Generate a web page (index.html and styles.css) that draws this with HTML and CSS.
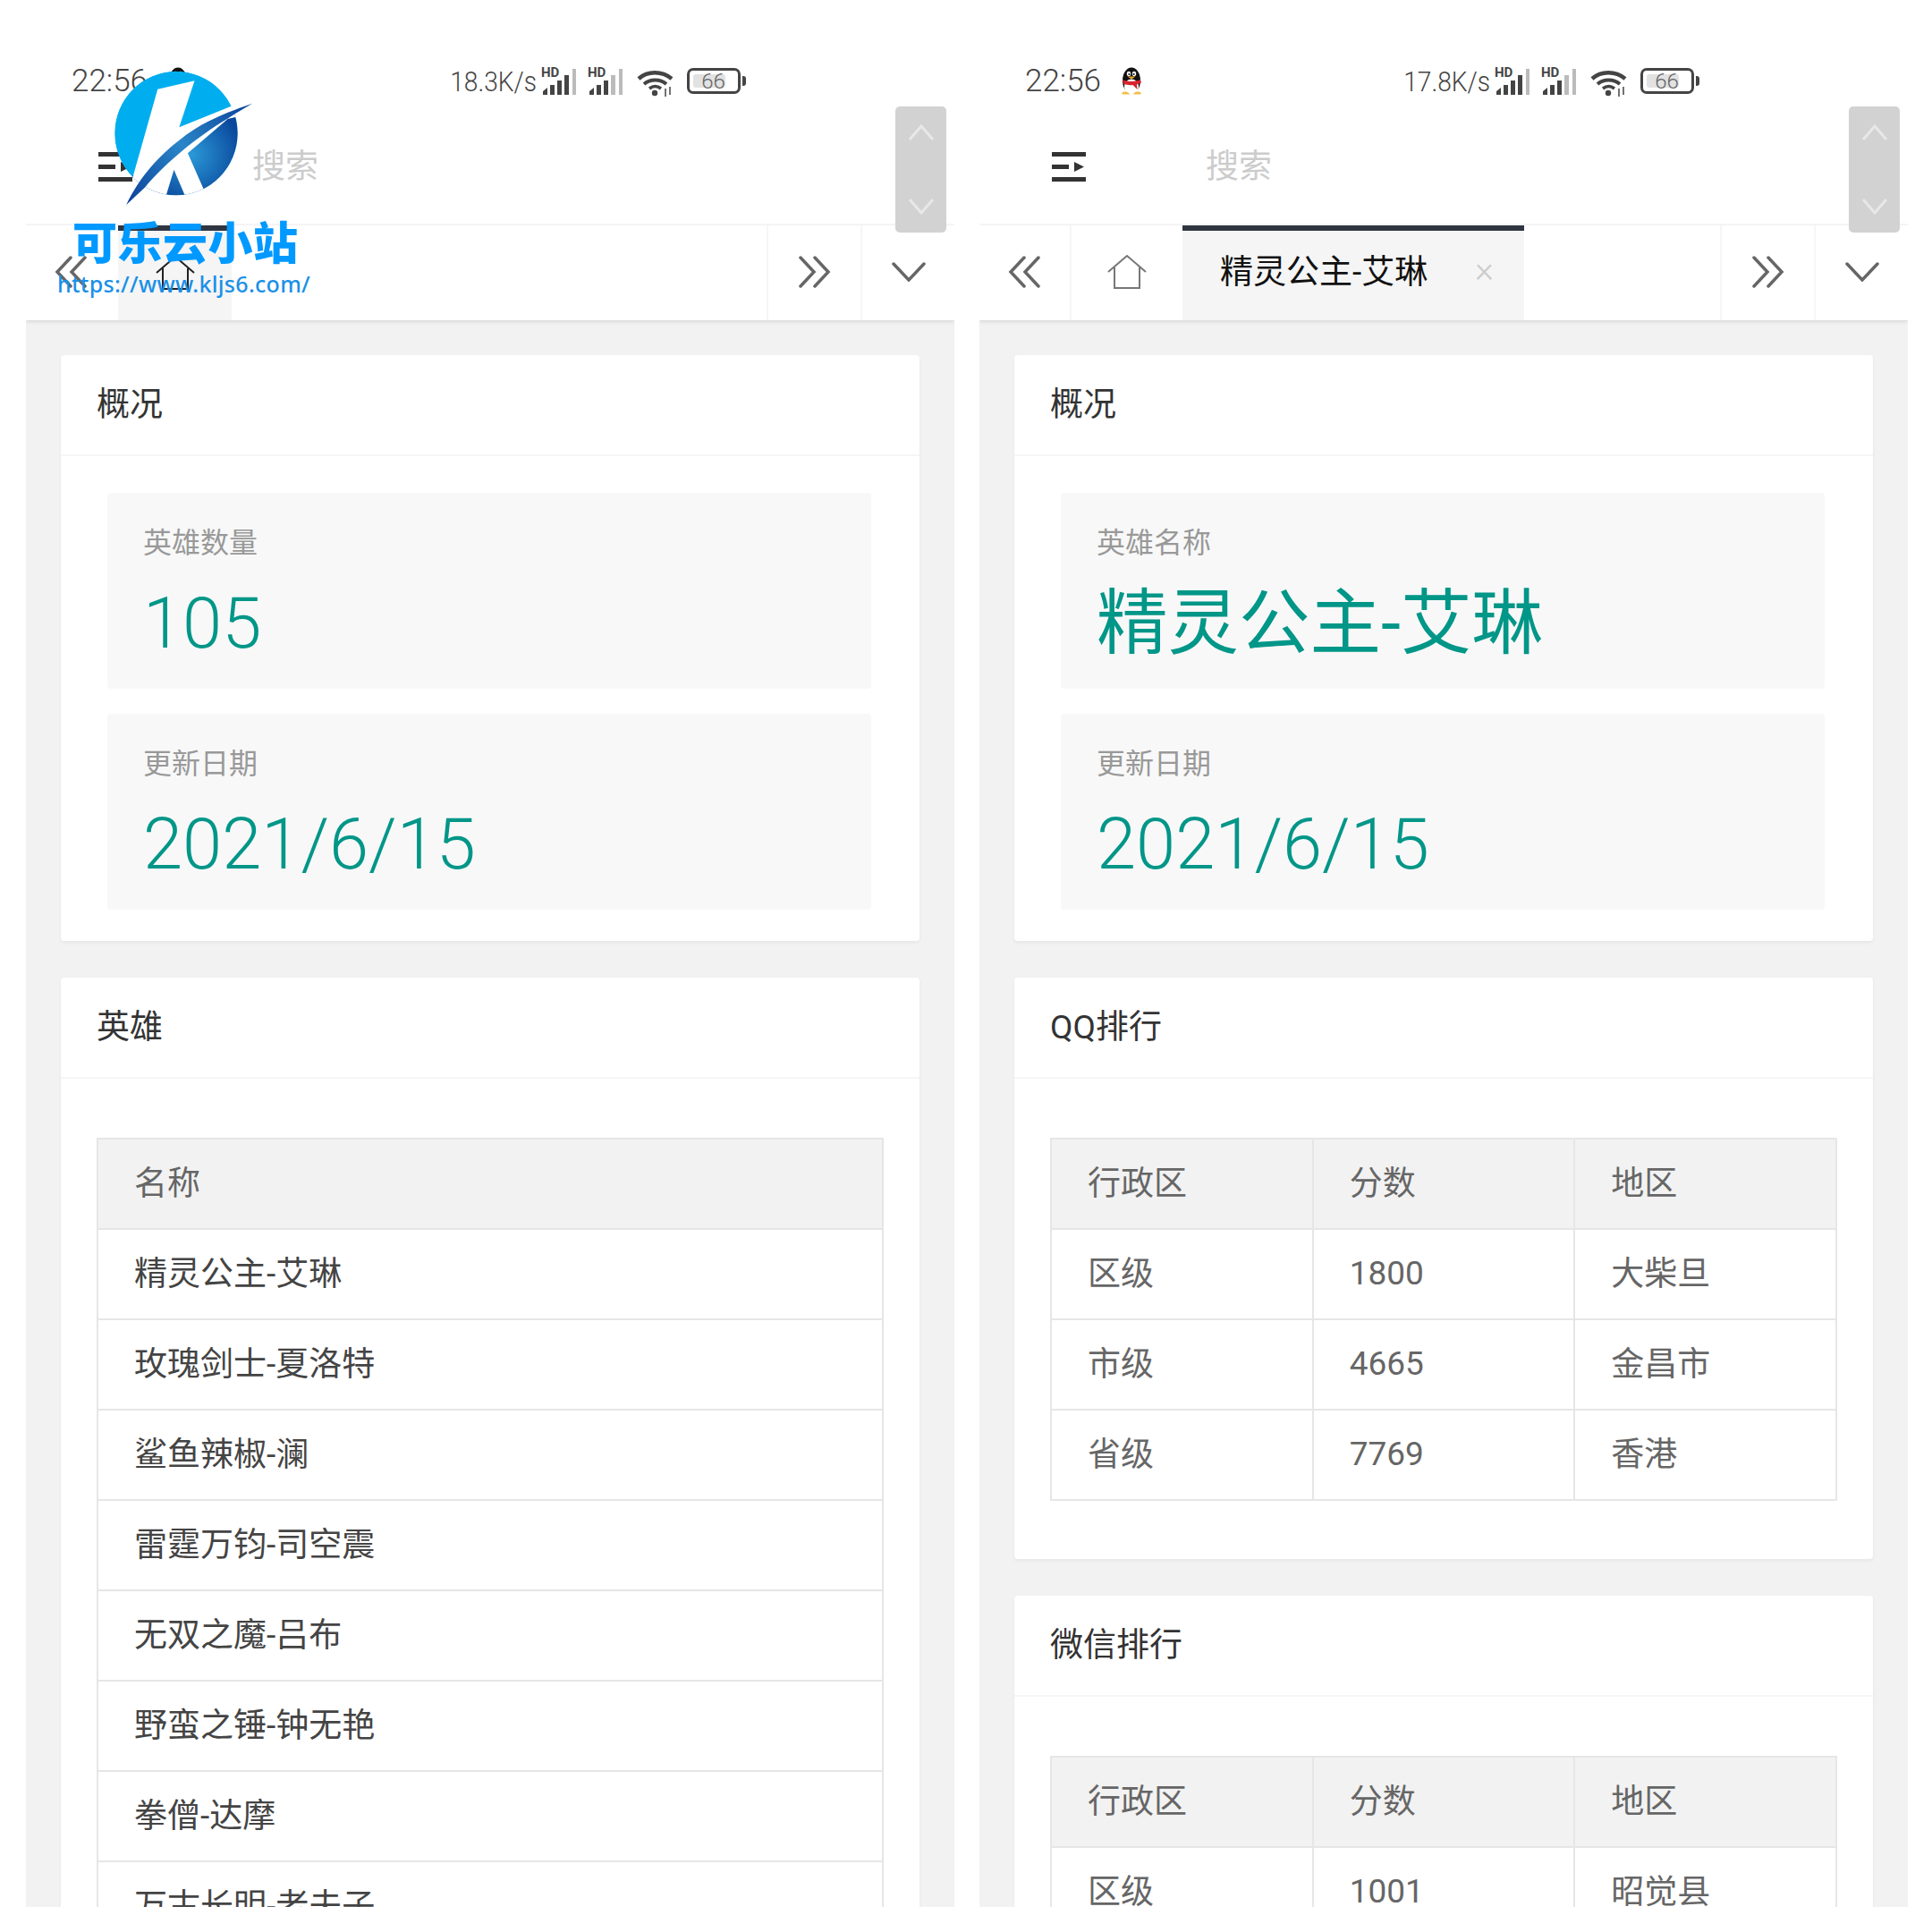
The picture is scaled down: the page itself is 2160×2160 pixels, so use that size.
FILE: index.html
```html
<!DOCTYPE html>
<html lang="zh-CN">
<head>
    <meta charset="UTF-8">
    <title>英雄排行</title>
    <link rel="stylesheet" href="styles.css">
</head>
<body>
    <svg class="defs" width="0" height="0">
        <defs>
            <symbol id="penguin" viewBox="0 0 26 32">
                <ellipse cx="13" cy="15" rx="10" ry="14.500" fill="#111"/>
                <ellipse cx="13" cy="22" rx="8" ry="8.500" fill="#fff"/>
                <ellipse cx="10" cy="7.500" rx="2.200" ry="2.800" fill="#fff"/>
                <ellipse cx="16" cy="7.500" rx="2.200" ry="2.800" fill="#fff"/>
                <circle cx="10.400" cy="8" r="1.100" fill="#111"/>
                <circle cx="15.600" cy="8" r="1.100" fill="#111"/>
                <path d="M8.500 10.500h9l-4.500 3z" fill="#f2a81d"/>
                <path d="M3 14c6 2.800 14 2.800 20 0l1 3.500-5 2 .5 5.500-5-5c-3.500.5-7 0-10.500-1.500z" fill="#d9232e"/>
                <path d="M2 29c3-2.500 8-1.500 9 1.500H3zM24 29c-3-2.500-8-1.500-9 1.500h8z" fill="#f2c04a"/>
            </symbol>
            <symbol id="wifi" viewBox="0 0 42 32">
                <path d="M2 11C12 2 28 2 39 11" fill="none" stroke="#444" stroke-width="4.500"/>
                <path d="M8 17c7-6 18-6 25 0" fill="none" stroke="#444" stroke-width="4"/>
                <path d="M14 22c4-3 9-3 13 0" fill="none" stroke="#444" stroke-width="3.500"/>
                <circle cx="20" cy="27" r="3.200" fill="#444"/>
                <path d="M32 22v9M37 20v9" stroke="#444" stroke-width="1.500"/>
            </symbol>
            <symbol id="chev-left" viewBox="0 0 37 36">
                <path d="M18 2L3 18l15 16M34 2L19 18l15 16" fill="none" stroke="#666" stroke-width="3.500" stroke-linecap="round"/>
            </symbol>
            <symbol id="chev-right" viewBox="0 0 37 36">
                <path d="M3 2l15 16L3 34M19 2l15 16-15 16" fill="none" stroke="#666" stroke-width="3.500" stroke-linecap="round"/>
            </symbol>
            <symbol id="chev-down" viewBox="0 0 38 22">
                <path d="M2 2l17 18L36 2" fill="none" stroke="#666" stroke-width="3.500" stroke-linecap="round"/>
            </symbol>
            <symbol id="home" viewBox="0 0 44 38">
                <path d="M1 19L22 1l21 18M8 14v23h28V14" fill="none" stroke="currentColor" stroke-width="2"/>
            </symbol>
            <symbol id="menu" viewBox="0 0 38 33">
                <path d="M0 0h38v5H0zM0 28h38v5H0zM0 14h19v5H0zM25 11l11 5.500-11 5.500z" fill="#333"/>
            </symbol>
        </defs>
    </svg>

    <div class="screen">
        <!-- left phone: hero list -->
        <div class="phone">
            <div class="status-bar">
                <span class="time">22:56</span>
                <svg class="qq-icon"><use href="#penguin"/></svg>
                <div class="status-right">
                    <span class="speed">18.3K/s</span>
                    <svg class="signal" viewBox="0 -6 40 36">
                        <text x="0" y="10" class="hd">HD</text>
                        <path d="M2 30v-4l5-4v8zM10 30V19h5v11zM18 30V14h5v16zM26 30V8h5v22z" fill="#444"/>
                        <path d="M35 30V1h4v29z" fill="#bbb"/>
                    </svg>
                    <svg class="signal signal-second" viewBox="0 -6 40 36">
                        <text x="0" y="10" class="hd">HD</text>
                        <path d="M2 30v-4l5-4v8zM10 30V19h5v11zM18 30V14h5v16z" fill="#444"/>
                        <path d="M26 30V8h5v22zM35 30V1h4v29z" fill="#bbb"/>
                    </svg>
                    <svg class="wifi"><use href="#wifi"/></svg>
                    <div class="battery"><span class="battery-level">66</span></div>
                    <div class="battery-nub"></div>
                </div>
            </div>
            <div class="header">
                <svg class="menu-icon"><use href="#menu"/></svg>
                <span class="search">搜索</span>
            </div>
            <div class="tabs">
                <div class="tab-arrow"><svg class="icon-double"><use href="#chev-left"/></svg></div>
                <div class="tab-home tab-active"><svg class="icon-home"><use href="#home"/></svg></div>
                <div class="tab-spacer"></div>
                <div class="tab-end"><svg class="icon-double"><use href="#chev-right"/></svg></div>
                <div class="tab-end"><svg class="icon-down"><use href="#chev-down"/></svg></div>
            </div>
            <div class="content">
                <div class="card">
                    <div class="card-title">概况</div>
                    <div class="card-body stats">
                        <div class="stat">
                            <div class="stat-label">英雄数量</div>
                            <div class="stat-value">105</div>
                        </div>
                        <div class="stat">
                            <div class="stat-label">更新日期</div>
                            <div class="stat-value">2021/6/15</div>
                        </div>
                    </div>
                </div>
                <div class="card">
                    <div class="card-title">英雄</div>
                    <div class="card-body">
                        <table class="data-table hero-table">
                            <thead><tr><th>名称</th></tr></thead>
                            <tbody>
                                <tr><td>精灵公主-艾琳</td></tr>
                                <tr><td>玫瑰剑士-夏洛特</td></tr>
                                <tr><td>鲨鱼辣椒-澜</td></tr>
                                <tr><td>雷霆万钧-司空震</td></tr>
                                <tr><td>无双之魔-吕布</td></tr>
                                <tr><td>野蛮之锤-钟无艳</td></tr>
                                <tr><td>拳僧-达摩</td></tr>
                                <tr><td>万古长明-老夫子</td></tr>
                            </tbody>
                        </table>
                    </div>
                </div>
            </div>
            <div class="scroll-thumb">
                <svg class="thumb-chev" viewBox="0 0 30 20"><path d="M2 18L15 3l13 15" fill="none" stroke="#e8e8e8" stroke-width="3"/></svg>
                <svg class="thumb-chev" viewBox="0 0 30 20"><path d="M2 2l13 15L28 2" fill="none" stroke="#e8e8e8" stroke-width="3"/></svg>
            </div>

            <!-- site watermark over the left phone -->
            <div class="watermark">
                <svg class="wm-logo" viewBox="360 100 480 480" preserveAspectRatio="none">
                    <defs>
                        <clipPath id="wm-disc"><ellipse cx="572" cy="328" rx="200" ry="208"/></clipPath>
                        <radialGradient id="wm-blue" gradientUnits="userSpaceOnUse" cx="620" cy="400" r="170">
                            <stop offset="0" stop-color="#2b9ad8"/>
                            <stop offset="1" stop-color="#0a479c"/>
                        </radialGradient>
                        <linearGradient id="wm-swoosh" gradientUnits="userSpaceOnUse" x1="410" y1="568" x2="820" y2="228">
                            <stop offset="0" stop-color="#0a3f9a"/>
                            <stop offset=".5" stop-color="#2a86c8"/>
                            <stop offset="1" stop-color="#0a3f9a"/>
                        </linearGradient>
                    </defs>
                    <g clip-path="url(#wm-disc)">
                        <ellipse cx="572" cy="328" rx="200" ry="208" fill="#00aeef"/>
                        <path d="M780 240V540H500L420 480L600 320z" fill="url(#wm-blue)"/>
                        <path d="M512 180L632 152L582 308L780 225V270L740 280L610 395L660 512L680 560H620L600 535L565 450L540 535L520 570H400L432 472z" fill="#fff"/>
                    </g>
                    <path d="M820 228C700 270 640 305 590 345C520 400 455 470 410 568L470 510C540 425 640 340 738 280C760 265 790 245 820 228z" fill="url(#wm-swoosh)"/>
                </svg>
                <div class="wm-name">可乐云小站</div>
                <div class="wm-url">https://www.kljs6.com/</div>
            </div>
        </div>

        <!-- right phone: hero detail -->
        <div class="phone">
            <div class="status-bar">
                <span class="time">22:56</span>
                <svg class="qq-icon"><use href="#penguin"/></svg>
                <div class="status-right">
                    <span class="speed">17.8K/s</span>
                    <svg class="signal" viewBox="0 -6 40 36">
                        <text x="0" y="10" class="hd">HD</text>
                        <path d="M2 30v-4l5-4v8zM10 30V19h5v11zM18 30V14h5v16zM26 30V8h5v22z" fill="#444"/>
                        <path d="M35 30V1h4v29z" fill="#bbb"/>
                    </svg>
                    <svg class="signal signal-second" viewBox="0 -6 40 36">
                        <text x="0" y="10" class="hd">HD</text>
                        <path d="M2 30v-4l5-4v8zM10 30V19h5v11zM18 30V14h5v16z" fill="#444"/>
                        <path d="M26 30V8h5v22zM35 30V1h4v29z" fill="#bbb"/>
                    </svg>
                    <svg class="wifi"><use href="#wifi"/></svg>
                    <div class="battery"><span class="battery-level">66</span></div>
                    <div class="battery-nub"></div>
                </div>
            </div>
            <div class="header">
                <svg class="menu-icon"><use href="#menu"/></svg>
                <span class="search">搜索</span>
            </div>
            <div class="tabs">
                <div class="tab-arrow tab-arrow-line"><svg class="icon-double"><use href="#chev-left"/></svg></div>
                <div class="tab-home tab-home-muted"><svg class="icon-home"><use href="#home"/></svg></div>
                <div class="tab-open tab-active">
                    <span class="tab-name">精灵公主-艾琳</span>
                    <span class="tab-close">×</span>
                </div>
                <div class="tab-spacer"></div>
                <div class="tab-end"><svg class="icon-double"><use href="#chev-right"/></svg></div>
                <div class="tab-end"><svg class="icon-down"><use href="#chev-down"/></svg></div>
            </div>
            <div class="content">
                <div class="card">
                    <div class="card-title">概况</div>
                    <div class="card-body stats">
                        <div class="stat">
                            <div class="stat-label">英雄名称</div>
                            <div class="stat-value stat-value-name">精灵公主-艾琳</div>
                        </div>
                        <div class="stat">
                            <div class="stat-label">更新日期</div>
                            <div class="stat-value">2021/6/15</div>
                        </div>
                    </div>
                </div>
                <div class="card">
                    <div class="card-title">QQ排行</div>
                    <div class="card-body">
                        <table class="data-table">
                            <thead><tr><th>行政区</th><th>分数</th><th>地区</th></tr></thead>
                            <tbody>
                                <tr><td>区级</td><td class="score">1800</td><td>大柴旦</td></tr>
                                <tr><td>市级</td><td class="score">4665</td><td>金昌市</td></tr>
                                <tr><td>省级</td><td class="score">7769</td><td>香港</td></tr>
                            </tbody>
                        </table>
                    </div>
                </div>
                <div class="card">
                    <div class="card-title">微信排行</div>
                    <div class="card-body">
                        <table class="data-table">
                            <thead><tr><th>行政区</th><th>分数</th><th>地区</th></tr></thead>
                            <tbody>
                                <tr><td>区级</td><td class="score">1001</td><td>昭觉县</td></tr>
                            </tbody>
                        </table>
                    </div>
                </div>
            </div>
            <div class="scroll-thumb">
                <svg class="thumb-chev" viewBox="0 0 30 20"><path d="M2 18L15 3l13 15" fill="none" stroke="#e8e8e8" stroke-width="3"/></svg>
                <svg class="thumb-chev" viewBox="0 0 30 20"><path d="M2 2l13 15L28 2" fill="none" stroke="#e8e8e8" stroke-width="3"/></svg>
            </div>
        </div>
    </div>
</body>
</html>
```

FILE: styles.css
```css
/* Two phone screenshots side by side */
body {
    margin: 0;
    padding: 0;
    background-color: #ffffff;
    font-family: Roboto, "Noto Sans CJK SC", sans-serif;
    color: #333;
}

.defs {
    display: block;
    height: 0;
}

.screen {
    display: flex;
    gap: 28px;
    padding-left: 29px;
    height: 2132px;
    overflow: hidden;
}

.phone {
    position: relative;
    width: 1038px;
    height: 2132px;
    overflow: hidden;
    background-color: #f2f2f2;
    flex: none;
}

/* Status bar */
.status-bar {
    display: flex;
    align-items: center;
    height: 117px;
    padding: 64px 233px 0 51px;
    box-sizing: border-box;
    background-color: #ffffff;
    color: #444;
}

.time {
    font-size: 35px;
    font-weight: 300;
}

.qq-icon {
    width: 26px;
    height: 32px;
    margin-left: 21px;
}

.status-right {
    display: flex;
    align-items: center;
    margin-left: auto;
}

.speed {
    display: inline-block;
    font-size: 32px;
    font-weight: 300;
    margin-right: 5px;
    white-space: nowrap;
    transform: scaleX(0.88);
    transform-origin: right center;
}

.signal {
    width: 40px;
    height: 36px;
    margin-top: -6px;
}

.signal-second {
    margin-left: 12px;
}

.hd {
    font-family: Roboto, sans-serif;
    font-size: 15px;
    font-weight: 700;
    fill: #444;
}

.wifi {
    width: 42px;
    height: 32px;
    margin-left: 15px;
    margin-top: 4px;
}

.battery {
    width: 60px;
    height: 29px;
    margin-left: 14px;
    padding: 4px;
    box-sizing: border-box;
    border: 3px solid #444;
    border-radius: 7px;
}

.battery-level {
    display: block;
    width: 36px;
    height: 100%;
    border-radius: 3px;
    background-color: #e2e2e2;
    color: #666;
    font-size: 24px;
    font-weight: 300;
    line-height: 16px;
    text-align: center;
    text-indent: 9px;
    white-space: nowrap;
}

.battery-nub {
    width: 4px;
    height: 11px;
    margin-left: 2px;
    border-radius: 0 3px 3px 0;
    background-color: #444;
}

/* Search header */
.header {
    display: flex;
    align-items: center;
    height: 135px;
    box-sizing: border-box;
    padding-left: 81px;
    background-color: #ffffff;
    border-bottom: 2px solid #f6f6f6;
}

.menu-icon {
    width: 38px;
    height: 33px;
    margin-top: 5px;
}

.search {
    margin-left: 134px;
    margin-bottom: 2px;
    font-size: 37px;
    color: #ccc;
}

/* Tab strip */
.tabs {
    position: relative;
    display: flex;
    align-items: stretch;
    height: 106px;
    background-color: #ffffff;
    box-shadow: 0 2px 4px rgba(0, 0, 0, 0.1);
}

.tab-arrow {
    display: flex;
    align-items: center;
    width: 103px;
    padding: 0 0 2px 32px;
    box-sizing: border-box;
    flex: none;
}

.tab-arrow-line {
    border-right: 2px solid #f6f6f6;
}

.tab-home {
    display: flex;
    align-items: center;
    justify-content: center;
    width: 124px;
    box-sizing: border-box;
    color: #222;
    flex: none;
}

.tab-home-muted {
    padding-bottom: 2px;
    color: #777;
}

.tab-active {
    background-color: #f5f5f5;
    border-top: 6px solid #2f3541;
    padding-bottom: 6px;
}

.tab-home.tab-active {
    width: 127px;
}

.tab-open {
    display: flex;
    align-items: center;
    justify-content: space-between;
    width: 382px;
    padding: 0 34px 14px 42px;
    box-sizing: border-box;
    flex: none;
}

.tab-name {
    font-size: 37px;
    color: #111;
}

.tab-close {
    font-size: 40px;
    font-weight: 300;
    color: #ccc;
}

.tab-spacer {
    flex: 1;
}

.tab-end {
    display: flex;
    align-items: center;
    justify-content: center;
    width: 105px;
    padding-bottom: 2px;
    box-sizing: border-box;
    border-left: 2px solid #f6f6f6;
    flex: none;
}

.icon-double {
    width: 37px;
    height: 36px;
}

.icon-home {
    width: 44px;
    height: 38px;
}

.icon-down {
    width: 38px;
    height: 22px;
}

/* Cards */
.content {
    padding: 39px 39px 0;
}

.card {
    margin-bottom: 41px;
    background-color: #ffffff;
    border-radius: 4px;
    box-shadow: 0 2px 4px rgba(0, 0, 0, 0.05);
}

.card-title {
    height: 113px;
    box-sizing: border-box;
    padding-left: 40px;
    border-bottom: 2px solid #f6f6f6;
    font-size: 37px;
    line-height: 111px;
    color: #333;
}

.card-body {
    padding: 66px 40px 65px;
}

.stats {
    display: flex;
    flex-direction: column;
    gap: 28px;
    padding: 41px 54px 35px 52px;
}

.stat {
    height: 219px;
    box-sizing: border-box;
    padding: 31px 40px 0;
    border-radius: 4px;
    background-color: #f8f8f8;
}

.stat-label {
    font-size: 32px;
    line-height: 50px;
    color: #999;
}

.stat-value {
    margin-top: 15px;
    font-size: 79.5px;
    font-weight: 300;
    line-height: 100px;
    color: #009688;
    white-space: nowrap;
}

.stat-value-name {
    font-weight: 400;
}

/* Tables */
.data-table {
    width: 100%;
    table-layout: fixed;
    border-collapse: collapse;
    font-size: 37px;
    color: #666;
}

.data-table th,
.data-table td {
    height: 101px;
    box-sizing: border-box;
    padding: 0 40px 8px;
    border: 2px solid #e6e6e6;
    text-align: left;
    font-weight: 400;
}

.data-table th {
    background-color: #f2f2f2;
}

.data-table .score {
    padding-bottom: 3px;
}

.hero-table td {
    color: #444;
}

/* Floating scroll buttons */
.scroll-thumb {
    position: absolute;
    top: 119px;
    right: 9px;
    display: flex;
    flex-direction: column;
    align-items: center;
    justify-content: space-between;
    width: 57px;
    height: 141px;
    padding: 19px 0;
    box-sizing: border-box;
    border-radius: 5px;
    background-color: #d2d2d2;
}

.thumb-chev {
    width: 30px;
    height: 20px;
}

/* Watermark */
.watermark {
    position: absolute;
    top: 73px;
    left: 35px;
    width: 300px;
}

.wm-logo {
    display: block;
    width: 165px;
    height: 160px;
    margin-left: 60px;
}

.wm-name {
    margin-top: 12px;
    margin-left: 17px;
    font-size: 50px;
    font-weight: 900;
    letter-spacing: 0.5px;
    line-height: 56px;
    color: #0099ff;
    white-space: nowrap;
}

.wm-url {
    font-family: "Noto Sans", sans-serif;
    font-size: 25px;
    font-weight: 500;
    letter-spacing: 0.3px;
    line-height: 32px;
    color: #1a90e8;
    white-space: nowrap;
}
```
